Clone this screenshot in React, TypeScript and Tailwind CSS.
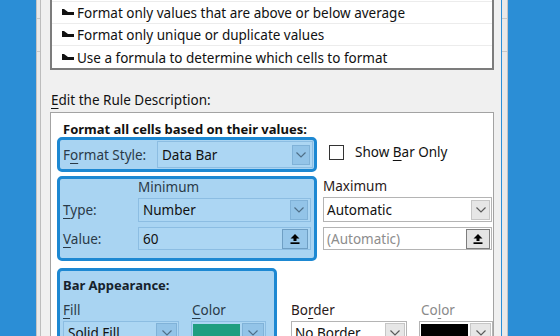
import React from "react";

const font = { fontFamily: '"Noto Sans", "Open Sans", sans-serif' };

function Arrow() {
  return (
    <svg width="12" height="7" viewBox="0 0 12 7" className="shrink-0">
      <polygon points="0,0 2,0 6,3 12,3 12,6 0,6" fill="#111" />
    </svg>
  );
}

function Chevron({ color = "#5a5a5a" }: { color?: string }) {
  return (
    <svg width="10" height="6" viewBox="0 0 10 6">
      <polyline points="0.5,0.5 5,5 9.5,0.5" fill="none" stroke={color} strokeWidth="1.2" />
    </svg>
  );
}

function UpIcon() {
  return (
    <svg width="10" height="10" viewBox="0 0 10 10">
      <polygon points="5,0 9.5,4.5 6.5,4.5 6.5,7 3.5,7 3.5,4.5 0.5,4.5" fill="#000" />
      <rect x="0.5" y="8.3" width="9" height="1.7" fill="#000" />
    </svg>
  );
}

function U({ children }: { children: React.ReactNode }) {
  return <span className="underline underline-offset-[3px] decoration-1">{children}</span>;
}

function HSelect({ text, w, h }: { text: string; w: string; h: string }) {
  return (
    <div className={`${w} ${h} flex items-center border border-[#8cbde2] bg-[#acd6f3] pl-[4px] pr-[2px]`}>
      <span className="flex-1 text-[13.5px] leading-[16px] text-[#111]">{text}</span>
      <div className="w-[18px] h-[20px] flex items-center justify-center bg-[#93c4e8] border border-[#80b2d8]">
        <Chevron color="#4f6f88" />
      </div>
    </div>
  );
}

export default function App() {
  const rows = [
    "",
    "Format only values that are above or below average",
    "Format only unique or duplicate values",
    "Use a formula to determine which cells to format",
  ];
  return (
    <div className="w-[560px] h-[336px] flex overflow-hidden bg-[#f0f0f0]" style={font}>
      <div className="w-[36px] shrink-0 bg-[#2b8ed6]" />
      <div className="w-[5px] shrink-0 bg-[#e9e9e9] border-l border-[#c4c4c4] border-r border-r-[#bdbdbd] flex flex-col">
        <div className="h-[19px] border-b border-[#c8c8c8]" />
        <div className="h-[33px] border-b border-[#c8c8c8]" />
      </div>
      <div className="flex-1 bg-[#f0f0f0] pl-[9px] pr-[7px] flex flex-col text-[#111]">
        {/* rule type list */}
        <div className="-mt-[22px] h-[92px] border-2 border-[#7c7c7c] bg-white flex flex-col">
          {rows.map((r, i) => (
            <div
              key={i}
              className={`h-[22px] shrink-0 flex items-center pl-[10px] ${i < 3 ? "border-b border-[#ececec]" : ""}`}
            >
              {r && (
                <>
                  <Arrow />
                  <span className="ml-[3px] text-[13.5px] leading-[16px] mt-[1px]">{r}</span>
                </>
              )}
            </div>
          ))}
        </div>

        <div className="mt-[21px] h-[18px] text-[13.5px] leading-[18px] pl-[1px]">
          <U>E</U>dit the Rule Description:
        </div>

        <div className="mt-[3px] flex-1 border border-[#a3a3a3] bg-white pl-[6px] flex flex-col">
          <div className="pt-[9px] pl-[6px] h-[24px] text-[13px] leading-[15px] font-bold">
            Format all cells based on their values:
          </div>

          {/* row 1 */}
          <div className="flex">
            <div className="w-[260px] h-[35px] border-[3px] border-[#1d88d2] rounded-[5px] bg-[#a9d4f2] flex items-center pl-[3px] pr-[1px]">
              <div className="w-[94px] text-[13.5px] leading-[16px] text-[#2a3a48]">
                F<U>o</U>rmat Style:
              </div>
              <HSelect text="Data Bar" w="flex-1" h="h-[27px]" />
            </div>
            <div className="ml-[12px] mt-[8px] flex items-start">
              <div className="w-[15px] h-[15px] border-[1.5px] border-[#333] bg-white" />
              <span className="ml-[11px] text-[13.5px] leading-[15px]">
                Show <U>B</U>ar Only
              </span>
            </div>
          </div>

          {/* row 2 */}
          <div className="flex mt-[4px]">
            <div className="w-[260px] h-[85px] border-[3px] border-[#1d88d2] rounded-[5px] bg-[#a9d4f2] pl-[3px] pr-[3px] flex flex-col">
              <div className="h-[16px] pl-[75px] text-[13.5px] leading-[16px] text-[#2a3a48]">Minimum</div>
              <div className="mt-[3px] flex items-center">
                <div className="w-[75px] text-[13.5px] leading-[16px] text-[#2a3a48]">
                  <U>T</U>ype:
                </div>
                <HSelect text="Number" w="flex-1" h="h-[24px]" />
              </div>
              <div className="mt-[5px] flex items-center">
                <div className="w-[75px] text-[13.5px] leading-[16px] text-[#2a3a48]">
                  <U>V</U>alue:
                </div>
                <div className="flex-1 h-[23px] flex items-center border border-[#8cbde2] bg-[#acd6f3] pl-[4px] pr-[2px]">
                  <span className="flex-1 text-[13.5px] leading-[16px]">60</span>
                  <div className="w-[26px] h-[20px] flex items-center justify-center bg-[#97c7ea] border border-[#6f9fc4]">
                    <UpIcon />
                  </div>
                </div>
              </div>
            </div>
            <div className="ml-[6px] w-[169px] pt-[2px] flex flex-col">
              <div className="h-[16px] text-[13.5px] leading-[16px] text-[#2a1a1a]">Maximum</div>
              <div className="mt-[3px] h-[25px] flex items-center border border-[#b4b4b4] bg-white pl-[3px] pr-[1px]">
                <span className="flex-1 text-[13.5px] leading-[16px]">Automatic</span>
                <div className="w-[19px] h-[20px] flex items-center justify-center bg-[#e6e6e6] border border-[#c6c6c6]">
                  <Chevron />
                </div>
              </div>
              <div className="mt-[5px] h-[23px] flex items-center border border-[#b4b4b4] bg-white pl-[3px] pr-[1px]">
                <span className="flex-1 text-[13.5px] leading-[16px] text-[#8d8d8d]">(Automatic)</span>
                <div className="w-[24px] h-[20px] flex items-center justify-center bg-[#e4e4e4] border border-[#7d7d7d]">
                  <UpIcon />
                </div>
              </div>
            </div>
          </div>

          {/* row 3 */}
          <div className="flex mt-[7px]">
            <div className="w-[220px] h-[90px] border-[3px] border-[#1d88d2] rounded-[5px] bg-[#a9d4f2] pl-[3px] flex flex-col">
              <div className="pt-[6px] h-[22px] text-[13px] leading-[16px] font-bold text-[#16222c]">Bar Appearance:</div>
              <div className="mt-[9px] flex">
                <div className="w-[116px]">
                  <div className="h-[16px] text-[13.5px] leading-[16px] text-[#2a3a48]">
                    <U>F</U>ill
                  </div>
                  <div className="mt-[3px] h-[24px] flex items-center border border-[#8cbde2] bg-[#acd6f3] pl-[4px] pr-[1px]">
                    <span className="flex-1 text-[13.5px] leading-[16px]">Solid Fill</span>
                    <div className="w-[21px] h-[20px] flex items-center justify-center bg-[#93c4e8] border border-[#80b2d8]">
                      <Chevron color="#4f6f88" />
                    </div>
                  </div>
                </div>
                <div className="ml-[12px] w-[75px]">
                  <div className="h-[16px] pl-[1px] text-[13.5px] leading-[16px] text-[#2a3a48]">
                    <U>C</U>olor
                  </div>
                  <div className="mt-[3px] h-[24px] flex items-center border border-[#8cbde2] bg-[#acd6f3] pl-[1px] pr-[1px]">
                    <div className="w-[48px] h-[18px] bg-[#1f9e80] mt-[2px] self-start" />
                    <div className="ml-[2px] w-[22px] h-[20px] flex items-center justify-center bg-[#93c4e8] border border-[#80b2d8]">
                      <Chevron color="#4f6f88" />
                    </div>
                  </div>
                </div>
              </div>
            </div>
            <div className="ml-[14px] mt-[34px] flex">
              <div className="w-[116px]">
                <div className="h-[16px] text-[13.5px] leading-[16px] text-[#2a1a1a]">
                  Bo<U>r</U>der
                </div>
                <div className="mt-[3px] h-[24px] flex items-center border border-[#b4b4b4] bg-white pl-[3px] pr-[1px]">
                  <span className="flex-1 text-[13.5px] leading-[16px]">No Border</span>
                  <div className="w-[20px] h-[20px] flex items-center justify-center bg-[#e6e6e6] border border-[#c6c6c6]">
                    <Chevron />
                  </div>
                </div>
              </div>
              <div className="ml-[12px] w-[74px]">
                <div className="h-[16px] pl-[2px] text-[13.5px] leading-[16px] text-[#8a8a8a]">
                  Co<U>l</U>or
                </div>
                <div className="mt-[3px] h-[24px] flex items-center border border-[#b4b4b4] bg-white pl-[1px] pr-[1px]">
                  <div className="w-[48px] h-[18px] bg-black mt-[2px] self-start" />
                  <div className="ml-[2px] w-[21px] h-[20px] flex items-center justify-center bg-[#e6e6e6] border border-[#c6c6c6]">
                    <Chevron />
                  </div>
                </div>
              </div>
            </div>
          </div>
        </div>
      </div>
      <div className="w-[1px] shrink-0 bg-[#2b8ed6]" />
      <div className="w-[6px] shrink-0 bg-[#e9e9e9] border-r border-[#c4c4c4] flex flex-col">
        <div className="h-[19px] border-b border-[#c8c8c8]" />
        <div className="h-[33px] border-b border-[#c8c8c8]" />
      </div>
      <div className="flex-1 bg-[#2b8ed6]" />
    </div>
  );
}
